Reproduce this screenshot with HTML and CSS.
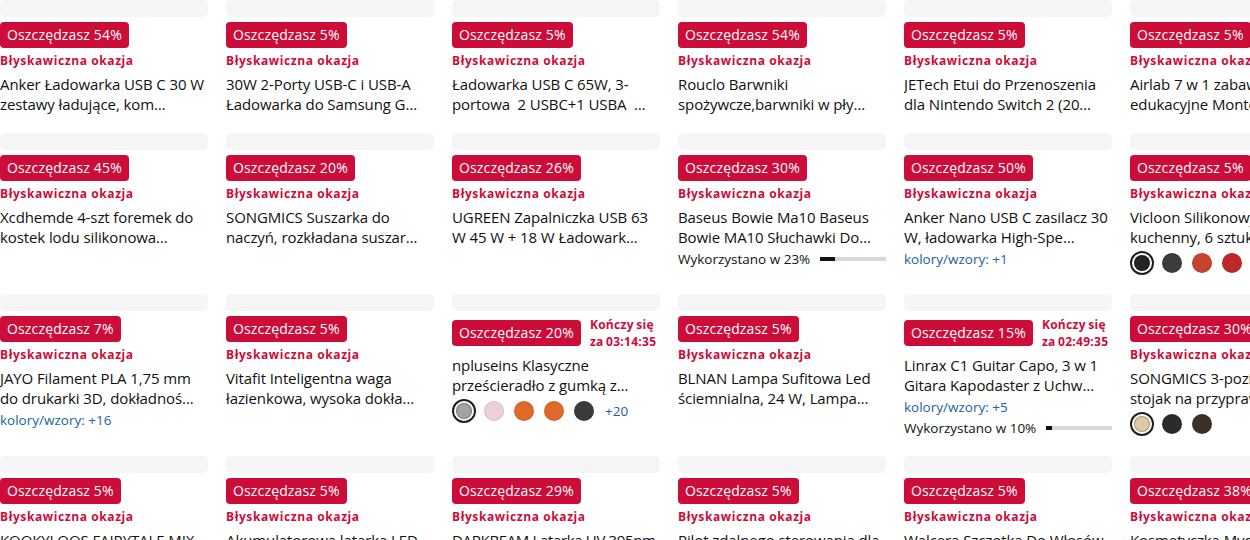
FILE: index.html
```html
<!DOCTYPE html>
<html lang="pl">
<head>
<meta charset="utf-8">
<title>Oferty</title>
<link rel="stylesheet" href="styles.css">
</head>
<body>
<div class="page">
  <div class="grid">
    <!-- Row 1 -->
    <div class="card">
      <div class="thumb"></div>
      <div class="head"><span class="badge">Oszczędzasz 54%</span></div>
      <div class="deal">Błyskawiczna okazja</div>
      <div class="title">Anker Ładowarka USB C 30 W zestawy ładujące, kom…</div>
    </div>
    <div class="card">
      <div class="thumb"></div>
      <div class="head"><span class="badge">Oszczędzasz 5%</span></div>
      <div class="deal">Błyskawiczna okazja</div>
      <div class="title">30W 2-Porty USB-C i USB-A Ładowarka do Samsung G…</div>
    </div>
    <div class="card">
      <div class="thumb"></div>
      <div class="head"><span class="badge">Oszczędzasz 5%</span></div>
      <div class="deal">Błyskawiczna okazja</div>
      <div class="title">Ładowarka USB C 65W, 3-portowa &nbsp;2 USBC+1 USBA &nbsp;…</div>
    </div>
    <div class="card">
      <div class="thumb"></div>
      <div class="head"><span class="badge">Oszczędzasz 54%</span></div>
      <div class="deal">Błyskawiczna okazja</div>
      <div class="title">Rouclo Barwniki spożywcze,barwniki w pły…</div>
    </div>
    <div class="card">
      <div class="thumb"></div>
      <div class="head"><span class="badge">Oszczędzasz 5%</span></div>
      <div class="deal">Błyskawiczna okazja</div>
      <div class="title">JETech Etui do Przenoszenia dla Nintendo Switch 2 (20…</div>
    </div>
    <div class="card">
      <div class="thumb"></div>
      <div class="head"><span class="badge">Oszczędzasz 5%</span></div>
      <div class="deal">Błyskawiczna okazja</div>
      <div class="title">Airlab 7 w 1 zabawki edukacyjne Montessori…</div>
    </div>

    <!-- Row 2 -->
    <div class="card">
      <div class="thumb"></div>
      <div class="head"><span class="badge">Oszczędzasz 45%</span></div>
      <div class="deal">Błyskawiczna okazja</div>
      <div class="title">Xcdhemde 4-szt foremek do kostek lodu silikonowa…</div>
    </div>
    <div class="card">
      <div class="thumb"></div>
      <div class="head"><span class="badge">Oszczędzasz 20%</span></div>
      <div class="deal">Błyskawiczna okazja</div>
      <div class="title">SONGMICS Suszarka do naczyń, rozkładana suszar…</div>
    </div>
    <div class="card">
      <div class="thumb"></div>
      <div class="head"><span class="badge">Oszczędzasz 26%</span></div>
      <div class="deal">Błyskawiczna okazja</div>
      <div class="title">UGREEN Zapalniczka USB 63 W 45 W + 18 W Ładowark…</div>
    </div>
    <div class="card">
      <div class="thumb"></div>
      <div class="head"><span class="badge">Oszczędzasz 30%</span></div>
      <div class="deal">Błyskawiczna okazja</div>
      <div class="title">Baseus Bowie Ma10 Baseus Bowie MA10 Słuchawki Do…</div>
      <div class="meta claimed">Wykorzystano w 23%<span class="bar"><span class="fill" style="width:22%"></span></span></div>
    </div>
    <div class="card">
      <div class="thumb"></div>
      <div class="head"><span class="badge">Oszczędzasz 50%</span></div>
      <div class="deal">Błyskawiczna okazja</div>
      <div class="title">Anker Nano USB C zasilacz 30 W, ładowarka High-Spe…</div>
      <div class="meta variants">kolory/wzory: +1</div>
    </div>
    <div class="card">
      <div class="thumb"></div>
      <div class="head"><span class="badge">Oszczędzasz 5%</span></div>
      <div class="deal">Błyskawiczna okazja</div>
      <div class="title">Vicloon Silikonowy zestaw kuchenny, 6 sztuk…</div>
      <div class="swatches">
        <span class="swatch sel"><i style="background:#232323"></i></span>
        <span class="swatch"><i style="background:#3c3c3c"></i></span>
        <span class="swatch"><i style="background:#c8432f"></i></span>
        <span class="swatch"><i style="background:#c0282b"></i></span>
        <span class="swatch"><i style="background:#7a8b6a"></i></span>
      </div>
    </div>

    <!-- Row 3 -->
    <div class="card">
      <div class="thumb"></div>
      <div class="head"><span class="badge">Oszczędzasz 7%</span></div>
      <div class="deal">Błyskawiczna okazja</div>
      <div class="title">JAYO Filament PLA 1,75 mm do drukarki 3D, dokładnoś…</div>
      <div class="meta variants">kolory/wzory: +16</div>
    </div>
    <div class="card">
      <div class="thumb"></div>
      <div class="head"><span class="badge">Oszczędzasz 5%</span></div>
      <div class="deal">Błyskawiczna okazja</div>
      <div class="title">Vitafit Inteligentna waga łazienkowa, wysoka dokła…</div>
    </div>
    <div class="card">
      <div class="thumb"></div>
      <div class="head"><span class="badge">Oszczędzasz 20%</span><span class="timer">Kończy się<br>za 03:14:35</span></div>
      <div class="title">npluseins Klasyczne prześcieradło z gumką z…</div>
      <div class="swatches">
        <span class="swatch sel"><i style="background:#a3a3a3"></i></span>
        <span class="swatch"><i style="background:#ebcfda"></i></span>
        <span class="swatch"><i style="background:#e0692a"></i></span>
        <span class="swatch"><i style="background:#e0692a"></i></span>
        <span class="swatch"><i style="background:#3a3a3a"></i></span>
        <span class="more">+20</span>
      </div>
    </div>
    <div class="card">
      <div class="thumb"></div>
      <div class="head"><span class="badge">Oszczędzasz 5%</span></div>
      <div class="deal">Błyskawiczna okazja</div>
      <div class="title">BLNAN Lampa Sufitowa Led ściemnialna, 24 W, Lampa…</div>
    </div>
    <div class="card">
      <div class="thumb"></div>
      <div class="head"><span class="badge">Oszczędzasz 15%</span><span class="timer">Kończy się<br>za 02:49:35</span></div>
      <div class="title">Linrax C1 Guitar Capo, 3 w 1 Gitara Kapodaster z Uchw…</div>
      <div class="meta variants">kolory/wzory: +5</div>
      <div class="meta claimed">Wykorzystano w 10%<span class="bar"><span class="fill" style="width:8%"></span></span></div>
    </div>
    <div class="card">
      <div class="thumb"></div>
      <div class="head"><span class="badge">Oszczędzasz 30%</span></div>
      <div class="deal">Błyskawiczna okazja</div>
      <div class="title">SONGMICS 3-poziomowy stojak na przyprawy…</div>
      <div class="swatches">
        <span class="swatch sel"><i style="background:#dccaa4"></i></span>
        <span class="swatch"><i style="background:#2b2b2b"></i></span>
        <span class="swatch"><i style="background:#3b3129"></i></span>
      </div>
    </div>

    <!-- Row 4 -->
    <div class="card">
      <div class="thumb"></div>
      <div class="head"><span class="badge">Oszczędzasz 5%</span></div>
      <div class="deal">Błyskawiczna okazja</div>
      <div class="title">KOOKYLOOS FAIRYTALE MIX Zestaw…</div>
    </div>
    <div class="card">
      <div class="thumb"></div>
      <div class="head"><span class="badge">Oszczędzasz 5%</span></div>
      <div class="deal">Błyskawiczna okazja</div>
      <div class="title">Akumulatorowa latarka LED czołowa…</div>
    </div>
    <div class="card">
      <div class="thumb"></div>
      <div class="head"><span class="badge">Oszczędzasz 29%</span></div>
      <div class="deal">Błyskawiczna okazja</div>
      <div class="title tight">DARKBEAM Latarka UV 395nm ultrafioletowa…</div>
    </div>
    <div class="card">
      <div class="thumb"></div>
      <div class="head"><span class="badge">Oszczędzasz 5%</span></div>
      <div class="deal">Błyskawiczna okazja</div>
      <div class="title">Pilot zdalnego sterowania dla bramy…</div>
    </div>
    <div class="card">
      <div class="thumb"></div>
      <div class="head"><span class="badge">Oszczędzasz 5%</span></div>
      <div class="deal">Błyskawiczna okazja</div>
      <div class="title">Walcera Szczotka Do Włosów prostująca…</div>
    </div>
    <div class="card">
      <div class="thumb"></div>
      <div class="head"><span class="badge">Oszczędzasz 38%</span></div>
      <div class="deal">Błyskawiczna okazja</div>
      <div class="title">Kosmetyczka Mydelniczka podróżna…</div>
    </div>
  </div>
</div>
</body>
</html>
```
FILE: styles.css
```css
html, body {
  margin: 0;
  padding: 0;
  background: #ffffff;
}

body {
  font-family: "Open Sans", "Noto Sans", sans-serif;
  color: #0f1111;
}

.page {
  width: 1250px;
  height: 540px;
  overflow: hidden;
}

.grid {
  display: grid;
  grid-template-columns: repeat(6, 208px);
  column-gap: 18px;
  row-gap: 19px;
  align-items: start;
}

.card {
  display: flex;
  flex-direction: column;
  min-width: 0;
}

.thumb {
  height: 17px;
  background: #f5f5f5;
  border-radius: 5px;
}

.head {
  display: flex;
  align-items: center;
  gap: 9px;
  margin-top: 5px;
}

.badge {
  flex: none;
  background: #cc0c39;
  color: #ffffff;
  font-size: 14px;
  line-height: 26px;
  letter-spacing: 0.15px;
  padding: 0 7px;
  border-radius: 4px;
  white-space: nowrap;
}

.timer {
  flex: none;
  color: #cc0c39;
  font-weight: 700;
  font-size: 12px;
  line-height: 17px;
  letter-spacing: 0.3px;
  word-spacing: -1px;
  white-space: nowrap;
}

.deal {
  margin-top: 5px;
  color: #cc0c39;
  font-weight: 700;
  font-size: 12px;
  line-height: 16px;
  letter-spacing: 0.6px;
  white-space: nowrap;
}

.title {
  margin-top: 5px;
  font-size: 15px;
  line-height: 20px;
  letter-spacing: -0.1px;
  color: #0f1111;
  display: -webkit-box;
  -webkit-line-clamp: 2;
  -webkit-box-orient: vertical;
  overflow: hidden;
}

.title.tight {
  letter-spacing: -0.35px;
}

.meta {
  margin-top: 3px;
  font-size: 13.5px;
  line-height: 18px;
  white-space: nowrap;
}

.variants {
  color: #2162a1;
}

.claimed {
  display: flex;
  align-items: center;
  gap: 10px;
  color: #0f1111;
}

.bar {
  flex: 1;
  height: 4px;
  background: #d5d9d9;
  display: flex;
}

.fill {
  height: 100%;
  background: #0f1111;
}

.swatches {
  margin-top: 4px;
  display: flex;
  align-items: center;
  gap: 6px;
  white-space: nowrap;
}

.swatch {
  box-sizing: border-box;
  width: 24px;
  height: 24px;
  flex: none;
  border-radius: 50%;
  display: flex;
  align-items: center;
  justify-content: center;
}

.swatch i {
  display: block;
  box-sizing: border-box;
  width: 20px;
  height: 20px;
  border-radius: 50%;
  border: 1px solid rgba(0, 0, 0, 0.08);
}

.swatch.sel {
  border: 2px solid #1f1f1f;
}

.swatch.sel i {
  width: 16px;
  height: 16px;
  border: 1px solid rgba(0, 0, 0, 0.25);
}

.more {
  color: #2162a1;
  font-size: 13.5px;
  line-height: 18px;
  margin-left: 3px;
}
```
